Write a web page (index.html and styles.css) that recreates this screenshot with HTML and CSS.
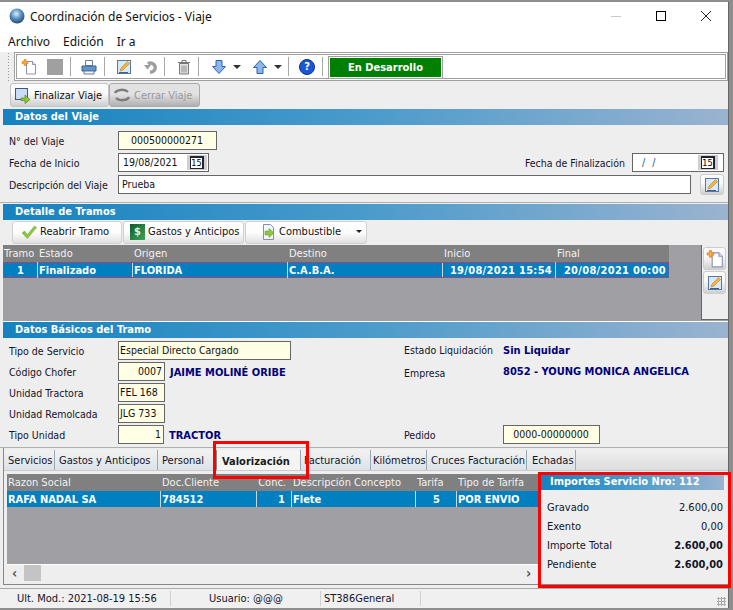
FILE: index.html
```html
<!DOCTYPE html>
<html lang="es">
<head>
<meta charset="utf-8">
<title>Coordinación de Servicios - Viaje</title>
<link rel="stylesheet" href="styles.css">
</head>
<body>
<svg class="defs" width="0" height="0" aria-hidden="true">
  <defs>
    <symbol id="i-new" viewBox="0 0 16 16">
      <path d="M5.500 2.500h6l3 3v9.500h-9z" fill="#fff" stroke="#8b93b8"/>
      <path d="M11.500 2.500v3h3" fill="#dfe6f5" stroke="#8b93b8"/>
      <path d="M3 0.500h2v2h2v2h-2v2h-2v-2h-2v-2h2z" fill="#f6a94a" stroke="#e07a10" stroke-width=".6"/>
    </symbol>
    <symbol id="i-edit" viewBox="0 0 16 16">
      <rect x="1.500" y="1.500" width="13" height="13" fill="#dbe8f8" stroke="#5577a6"/>
      <path d="M4 12l1-3 6.500-6.500 2 2-6.500 6.500z" fill="#f3b63c" stroke="#a87610" stroke-width=".5"/>
      <path d="M3 13.500h9" stroke="#3b5f92"/>
    </symbol>
  </defs>
</svg>
<div class="window">
  <header class="titlebar">
    <svg class="app-icon" width="16" height="16" viewBox="0 0 16 16"><defs><radialGradient id="globe" cx=".45" cy=".35" r=".7"><stop offset="0" stop-color="#dfeefa"/><stop offset=".45" stop-color="#5d97c7"/><stop offset="1" stop-color="#1d3d63"/></radialGradient></defs><circle cx="8" cy="8" r="7.500" fill="url(#globe)"/></svg>
    <span class="title-text">Coordinación de Servicios - Viaje</span>
    <div class="win-controls">
      <svg width="12" height="12" viewBox="0 0 12 12"><path d="M1 6.500h10" stroke="#c8c8c8"/></svg>
      <svg width="12" height="12" viewBox="0 0 12 12"><rect x="1.500" y="1.500" width="9" height="9" fill="none" stroke="#000"/></svg>
      <svg width="12" height="12" viewBox="0 0 12 12"><path d="M1 1l10 10M11 1L1 11" stroke="#222"/></svg>
    </div>
  </header>
  <nav class="menubar"><span>Archivo</span><span>Edición</span><span>Ir a</span></nav>

  <div class="toolbar">
    <span class="grip"></span>
    <div class="tools">
      <svg class="tool" width="16" height="16"><use href="#i-new"/></svg>
      <span class="tool stop ml10"></span>
      <span class="sep ml7"></span>
      <svg class="tool ml10" width="16" height="16" viewBox="0 0 16 16"><path d="M4.500 1.500h7v5h-7z" fill="#fff" stroke="#6b7a90"/><path d="M1 7h14v5H1z" fill="#5f96d2" stroke="#3c5f8a"/><path d="M3 12h10v3H3z" fill="#eef3f8" stroke="#6b7a90"/></svg>
      <span class="sep ml7"></span>
      <svg class="tool ml11" width="16" height="16"><use href="#i-edit"/></svg>
      <svg class="tool ml11" width="16" height="16" viewBox="0 0 16 16"><path d="M5 5a4.500 4.500 0 1 1 2 8" fill="none" stroke="#9d9d9d" stroke-width="3.500"/><path d="M1 6h7l-3.500 4.500z" fill="#9d9d9d"/></svg>
      <span class="sep ml5"></span>
      <svg class="tool ml11" width="16" height="16" viewBox="0 0 16 16"><path d="M2 3.500h12M6 3V1.500h4V3" fill="none" stroke="#777"/><path d="M3.500 4.500h9v10.500h-9z" fill="#e4e4e4" stroke="#777"/><path d="M6 6.500v7M8 6.500v7M10 6.500v7" stroke="#8c8c8c"/></svg>
      <span class="sep ml6"></span>
      <svg class="tool ml12" width="16" height="16" viewBox="0 0 16 16"><path d="M5 1.500h6v6h3.500L8 14.500 1.500 7.500H5z" fill="#8db7ea" stroke="#2a62ad"/></svg>
      <span class="caret ml6"></span>
      <svg class="tool ml11" width="16" height="16" viewBox="0 0 16 16"><path d="M5 14.500h6v-6h3.500L8 1.500 1.500 8.500H5z" fill="#8db7ea" stroke="#2a62ad"/></svg>
      <span class="caret ml6"></span>
      <span class="sep ml6"></span>
      <span class="help ml10">?</span>
      <span class="sep ml7"></span>
      <span class="status-badge ml6">En Desarrollo</span>
    </div>
  </div>

  <div class="actions">
    <button class="btn btn-final" type="button">
      <svg width="17" height="17" viewBox="0 0 17 17"><rect x="1.500" y="1.500" width="12" height="11" fill="#c9dcf2" stroke="#39598a"/><path d="M7 11h4V8l5 4.500-5 4v-3H7z" fill="#8dc63f" stroke="#4f8a10" stroke-width=".7"/></svg>
      Finalizar Viaje
    </button>
    <button class="btn btn-close" type="button">
      <svg width="18" height="16" viewBox="0 0 18 16"><path d="M2 6a7 4 0 0 1 13-1M16 10a7 4 0 0 1-13 1" fill="none" stroke="#7d7d7d" stroke-width="2.500"/></svg>
      Cerrar Viaje
    </button>
  </div>

  <h2 class="band">Datos del Viaje</h2>
  <section class="viaje">
    <div class="row">
      <label class="lab">N° del Viaje</label>
      <span class="inp yellow center w-99">000500000271</span>
    </div>
    <div class="row">
      <label class="lab">Fecha de Inicio</label>
      <span class="inp date w-91">19/08/2021<span class="cal"><span>15</span></span></span>
      <label class="lab-end">Fecha de Finalización</label>
      <span class="inp date w-92 blank"><span class="slashes">/ /</span><span class="cal"><span>15</span></span></span>
    </div>
    <div class="row">
      <label class="lab">Descripción del Viaje</label>
      <span class="inp w-desc">Prueba</span>
      <span class="sq-btn"><svg width="16" height="16"><use href="#i-edit"/></svg></span>
    </div>
  </section>

  <h2 class="band band-2">Detalle de Tramos</h2>
  <div class="tramo-tools">
    <button class="btn2 b-reabrir" type="button"><svg width="16" height="14" viewBox="0 0 16 14"><path d="M1 8l2.500-2 3 3.500L13.500 1l2 1.500L6.500 13.500z" fill="#8ec63f" stroke="#6aa52a" stroke-width=".5"/></svg>Reabrir Tramo</button>
    <button class="btn2 b-gastos" type="button"><span class="dollar">$</span>Gastos y Anticipos</button>
    <button class="btn2 b-comb" type="button"><svg width="16" height="16" viewBox="0 0 16 16"><path d="M3.500 .5h7l3 3v12h-10z" fill="#f4f7fc" stroke="#7f8fb0"/><path d="M5 7h4V4.500L14 9l-5 4.500V11H5z" fill="#8dc63f" stroke="#5e9a1c" stroke-width=".5"/></svg>Combustible<span class="mini-caret"></span></button>
  </div>
  <section class="tramos">
    <div class="grid-area">
      <div class="grid-head g-tramos"><span>Tramo</span><span>Estado</span><span>Origen</span><span>Destino</span><span>Inicio</span><span>Final</span></div>
      <div class="grid-row g-tramos dotted"><span class="c">1</span><span>Finalizado</span><span>FLORIDA</span><span>C.A.B.A.</span><span class="r wide">19/08/2021 15:54</span><span class="r wide">20/08/2021 00:00</span></div>
    </div>
    <aside class="side-btns">
      <span class="sq-btn tall"><svg width="18" height="18"><use href="#i-new"/></svg></span>
      <span class="sq-btn tall"><svg width="16" height="16"><use href="#i-edit"/></svg></span>
    </aside>
  </section>

  <h2 class="band band-3">Datos Básicos del Tramo</h2>
  <section class="basicos">
    <div class="col-left">
      <div class="row r21"><label class="lab">Tipo de Servicio</label><span class="inp yellow w-173">Especial Directo Cargado</span></div>
      <div class="row r21"><label class="lab">Código Chofer</label><span class="inp yellow right w-47">0007</span><strong class="val">JAIME MOLINÉ ORIBE</strong></div>
      <div class="row r21"><label class="lab">Unidad Tractora</label><span class="inp yellow w-47">FEL 168</span></div>
      <div class="row r21"><label class="lab">Unidad Remolcada</label><span class="inp yellow w-47">JLG 733</span></div>
      <div class="row r21"><label class="lab">Tipo Unidad</label><span class="inp yellow right w-46">1</span><strong class="val">TRACTOR</strong></div>
    </div>
    <div class="col-right">
      <div class="row r21"><label class="lab2">Estado Liquidación</label><strong class="val0">Sin Liquidar</strong></div>
      <div class="row r21"><label class="lab2 low">Empresa</label><strong class="val0">8052 - YOUNG MONICA ANGELICA</strong></div>
      <div class="row r21"></div>
      <div class="row r21"></div>
      <div class="row r21"><label class="lab2 low1">Pedido</label><span class="inp yellow center w-97">0000-00000000</span></div>
    </div>
  </section>

  <section class="tabs-wrap">
    <div class="tabs">
      <span class="tab t1">Servicios</span><span class="tab t2">Gastos y Anticipos</span><span class="tab t3">Personal</span><span class="tab active t4">Valorización</span><span class="tab t5">Facturación</span><span class="tab t6">Kilómetros</span><span class="tab t7">Cruces Facturación</span><span class="tab t8">Echadas</span>
    </div>
    <div class="tab-body">
      <div class="left-grid">
        <div class="grid-area g2">
          <div class="grid-head g-val"><span>Razon Social</span><span>Doc.Cliente</span><span class="r">Conc.</span><span>Descripción Concepto</span><span>Tarifa</span><span>Tipo de Tarifa</span></div>
          <div class="grid-row g-val"><span>RAFA NADAL SA</span><span>784512</span><span class="r">1</span><span>Flete</span><span class="c">5</span><span>POR ENVIO</span></div>
        </div>
        <div class="hscroll"><span class="arrow">‹</span><span class="thumb"></span><span class="arrow end">›</span></div>
      </div>
      <aside class="importes">
        <h3 class="band imp-band">Importes Servicio Nro: 112</h3>
        <dl class="imp-list">
          <div><dt>Gravado</dt><dd>2.600,00</dd></div>
          <div><dt>Exento</dt><dd>0,00</dd></div>
          <div><dt>Importe Total</dt><dd class="b">2.600,00</dd></div>
          <div><dt>Pendiente</dt><dd class="b">2.600,00</dd></div>
        </dl>
      </aside>
    </div>
  </section>

  <footer class="statusbar">
    <span class="s1">Ult. Mod.: 2021-08-19 15:56</span><span class="s2">Usuario: @@@</span><span class="s3">ST386General</span><span class="grip-corner"></span>
  </footer>
</div>
<div class="redbox red-a"></div>
<div class="redbox red-b"></div>
</body>
</html>
```
FILE: styles.css
```css
* { box-sizing: border-box; }
html, body { margin: 0; padding: 0; }
body {
  width: 733px; height: 610px; overflow: hidden; position: relative;
  background: #8e8e8e;
  font-family: "DejaVu Sans Condensed", "DejaVu Sans", sans-serif;
  font-stretch: condensed;
  font-size: 11px; color: #14142a;
}
.defs { position: absolute; }
.window {
  width: 729px; height: 606px; margin-top: 2px;
  background: #eeeeee; border-right: 1px solid #666; border-bottom: 1px solid #666;
  display: flex; flex-direction: column;
}
.titlebar {
  height: 28px; background: #fff; display: flex; align-items: center; padding-left: 9px;
  flex: none;
}
.app-icon { margin-right: 5px; }
.title-text { font-family: "Noto Sans", sans-serif; font-size: 12px; color: #111; }
.win-controls { margin-left: auto; display: flex; gap: 33px; padding-right: 16px; }
.menubar {
  height: 22px; background: #fff; display: flex; align-items: center; gap: 13px;
  padding-left: 8px; flex: none; font-family: "Noto Sans", sans-serif; font-size: 12px; color: #111;
}
.toolbar {
  height: 29px; flex: none; background: #eee; display: flex; align-items: stretch;
}
.grip { width: 14px; background: radial-gradient(circle, #999 .8px, transparent 1px) 7px 0 / 3px 3px repeat-y; }
.tools {
  flex: 1; border: 3px double #a0a0a0; background: #fff; display: flex; align-items: center; padding-left: 4px;
}
.tool { flex: none; }
.ml5 { margin-left: 5px; }
.ml6 { margin-left: 6px; }
.ml7 { margin-left: 7px; }
.ml10 { margin-left: 10px; }
.ml11 { margin-left: 11px; }
.ml12 { margin-left: 12px; }
.stop { width: 16px; height: 16px; background: #a0a0a0; }
.sep { width: 1px; height: 19px; background: #a8a8a8; flex: none; }
.caret { width: 0; height: 0; border: 4px solid transparent; border-top: 4px solid #333; border-bottom: 0; flex: none; }
.help {
  width: 16px; height: 16px; border-radius: 50%; flex: none;
  background: #1a56d6; border: 1px solid #0b2e8c; color: #fff; font-weight: 700; font-size: 11px; line-height: 14px; text-align: center;
}
.status-badge {
  width: 113px; height: 21px; background: #008000; color: #fff; font-weight: 700; font-size: 11px;
  line-height: 19px; text-align: center; border: 1px solid #fff; outline: 1px solid #a0a0a0; margin-top: 1px;
}
.actions { height: 28px; flex: none; display: flex; align-items: center; padding-left: 10px; }
.btn {
  height: 24px; border: 1px solid #c4c4c4; border-radius: 3px; padding: 0 0 0 3px; display: flex; align-items: center; gap: 3px;
  font: inherit; color: #111; background: linear-gradient(#fbfbfb 40%, #cfcfcf); white-space: nowrap;
}
.btn-final { width: 99px; }
.btn-close { width: 91px; color: #9a9a9a; background: linear-gradient(#e2e2e2 45%, #b0b0b0); border-color: #aaa; }
.band {
  margin: 0 0 0 3px; height: 16px; flex: none; font-size: 11px; font-weight: 700; color: #fff; line-height: 15px; padding-left: 12px;
  background: linear-gradient(90deg, #1582bf, #4a9bcb 50%, #9ab3d0);
}
.viaje { height: 78px; flex: none; padding: 6px 0 0 9px; border-bottom: 1px solid #b0b0b0; }
.row { display: flex; align-items: flex-start; height: 22px; }
.lab { width: 109px; flex: none; font-size: 10.5px; line-height: 21px; white-space: nowrap; }
.lab-end { margin-left: auto; margin-right: 7px; font-size: 10.5px; line-height: 21px; white-space: nowrap; }
.inp {
  display: block; height: 19px; border: 1px solid #666; background: #fff; font-size: 10.5px; line-height: 17px; padding: 0 3px; flex: none; color: #111; position: relative; white-space: nowrap;
}
.yellow { background: #ffffe6; padding: 0 2px 0 1px; }
.center { text-align: center; }
.right { text-align: right; }
.w-99 { width: 99px; }
.w-91 { width: 91px; }
.w-92 { width: 92px; margin-right: 4px; }
.w-desc { width: 573px; }
.w-173 { width: 173px; }
.w-47 { width: 47px; }
.w-46 { width: 46px; }
.w-97 { width: 97px; }
.date { padding-left: 4px; }
.slashes { color: #14549e; padding-left: 5px; word-spacing: 4px; }
.cal {
  position: absolute; right: 1px; top: 1px; width: 20px; height: 15px; background: #cfcfcf;
  display: flex; align-items: center; justify-content: center;
}
.blank .cal { right: 5px; }
.cal span {
  width: 14px; height: 13px; background: #fff; border: 1px solid #223; border-top-width: 2px; border-right-width: 2px;
  font-size: 9px; line-height: 10px; text-align: center; color: #000;
}
.sq-btn {
  width: 24px; height: 21px; border: 1px solid #ccc; border-radius: 3px; background: linear-gradient(#fafafa 40%, #d0d0d0);
  display: flex; align-items: center; justify-content: center; margin: -1px 0 0 9px; flex: none;
}
.band-2 { margin-top: 1px; }
.tramo-tools { height: 25px; flex: none; display: flex; align-items: flex-start; padding: 1px 0 0 12px; gap: 1px; }
.btn2 {
  height: 23px; border: 1px solid #d0d0d0; border-radius: 3px; background: linear-gradient(#fdfdfd 50%, #e0e0e0);
  display: flex; align-items: center; gap: 3px; font: inherit; color: #111; padding: 0 0 2px 8px; white-space: nowrap;
}
.b-reabrir { width: 110px; }
.b-gastos { width: 121px; padding-left: 6px; }
.b-comb { width: 122px; padding-left: 14px; }
.mini-caret { width: 0; height: 0; border: 3px solid transparent; border-top: 3px solid #222; border-bottom: 0; margin-left: auto; margin-right: 4px; }
.dollar { width: 15px; height: 16px; background: linear-gradient(135deg, #0f5a2a, #3fa45a); color: #dff2d8; font-weight: 700; text-align: center; line-height: 16px; }
.tramos { height: 77px; flex: none; margin-left: 3px; display: flex; background: #a09fa4; border-bottom: 1px solid #fff; }
.grid-area { flex: 1; }
.grid-head { height: 17px; background: #808080; color: #f2f2f2; }
.grid-row { height: 16px; background: #0080c0; color: #fff; font-weight: 700; }
.dotted { outline: 1px dotted #a4477a; outline-offset: -1px; }
.g-tramos { width: 666px; display: grid; grid-template-columns: 35px 95px 155px 155px 113px 113px; line-height: 17px; }
.g-tramos span { padding-left: 1px; white-space: nowrap; overflow: hidden; }
.grid-row span { border-right: 1px solid #c9d6de; padding-top: 2px; line-height: 14px; }
.grid-row span:last-child { border-right: 0; }
.g-tramos span.r { padding-right: 3px; }
.wide { letter-spacing: .3px; }
.c { text-align: center; }
.r { text-align: right; padding-right: 3px; }
.side-btns { width: 27px; flex: none; background: #eee; border-left: 1px solid #666; border-bottom: 1px solid #666; padding-top: 2px; height: 75px; display: flex; flex-direction: column; gap: 1px; }
.sq-btn.tall { width: 23px; height: 23px; margin: 0 0 0 1px; }
.basicos { height: 110px; flex: none; display: flex; padding: 3px 0 0 9px; border-bottom: 1px solid #b0b0b0; }
.col-left { width: 395px; flex: none; }
.r21 { height: 21px; }
.val { color: #00007a; font-weight: 700; margin-left: 5px; line-height: 21px; white-space: nowrap; }
.lab2 { width: 99px; flex: none; font-size: 10.5px; line-height: 19px; white-space: nowrap; }
.low { padding-top: 2px; }
.low1 { padding-top: 1px; }
.val0 { color: #00007a; font-weight: 700; line-height: 19px; white-space: nowrap; }
.tabs-wrap { flex: 1; margin: 0 0 3px 3px; border-left: 1px solid #888; border-bottom: 1px solid #888; display: flex; flex-direction: column; padding-top: 2px; }
.tabs { height: 21px; flex: none; display: flex; align-items: stretch; background: linear-gradient(#f0f0f0, #dcdcdc); border-bottom: 1px solid #ccc; }
.tab { border-right: 1px solid #9aa7b5; line-height: 21px; padding-left: 4px; white-space: nowrap; overflow: hidden; background: linear-gradient(#f2f2f2, #dde2e8); }
.t1 { width: 51px; }
.t2 { width: 103px; }
.t3 { width: 58px; }
.t4 { width: 85px; padding-left: 5px; }
.t5 { width: 70px; padding-left: 3px; }
.t6 { width: 56px; padding-left: 2px; }
.t7 { width: 100px; }
.t8 { width: 49px; padding-left: 5px; }
.active { font-weight: 700; background: #f4f4f4; border-left: 1px solid #888; line-height: 23px; color: #1a1a1a; }
.tab-body { flex: 1; display: flex; padding: 3px 4px 0 3px; }
.left-grid { width: 531px; flex: none; display: flex; flex-direction: column; }
.g2 { flex: none; height: 91px; background: #a09fa4; border-bottom: 1px solid #fff; }
.g-val { display: grid; grid-template-columns: 154px 96px 35px 124px 41px 81px; line-height: 17px; }
.g-val span { padding-left: 1px; white-space: nowrap; overflow: hidden; }
.g-val span.r { padding-right: 6px; }
.hscroll { height: 19px; display: flex; align-items: flex-start; color: #555; font-weight: 700; font-size: 14px; line-height: 16px; padding: 0 5px; }
.arrow { width: 7px; }
.thumb { width: 17px; height: 16px; background: #c4c4c4; margin-left: 5px; }
.end { margin-left: auto; }
.importes { flex: 1; padding: 0 0 0 2px; }
.imp-band { margin: 0; padding-left: 10px; width: 184px; }
.imp-list { margin: 8px 0 0; padding: 0 1px 0 7px; }
.imp-list div { display: flex; justify-content: space-between; height: 19px; line-height: 19px; }
.imp-list dd { margin: 0; }
.imp-list .b { font-weight: 700; }
.statusbar { height: 20px; flex: none; display: flex; align-items: stretch; background: #f0f0f0; border-top: 1px solid #aaa; color: #14142a; }
.statusbar span { border-right: 1px solid #d0d0d0; margin: 2px 0; line-height: 15px; white-space: nowrap; }
.s1 { width: 171px; padding-left: 17px; }
.s2 { width: 150px; padding-left: 38px; }
.s3 { width: 100px; padding-left: 3px; }
.statusbar .grip-corner {
  border: 0; margin: 8px 2px 0 auto; width: 9px; height: 9px;
  background: radial-gradient(circle, #aaa 1px, transparent 1.1px) 0 0 / 3px 3px;
}
.redbox { position: absolute; border: 3px solid #f00; pointer-events: none; }
.red-a { left: 213px; top: 441px; width: 96px; height: 38px; }
.red-b { left: 538px; top: 472px; width: 193px; height: 116px; }
```
